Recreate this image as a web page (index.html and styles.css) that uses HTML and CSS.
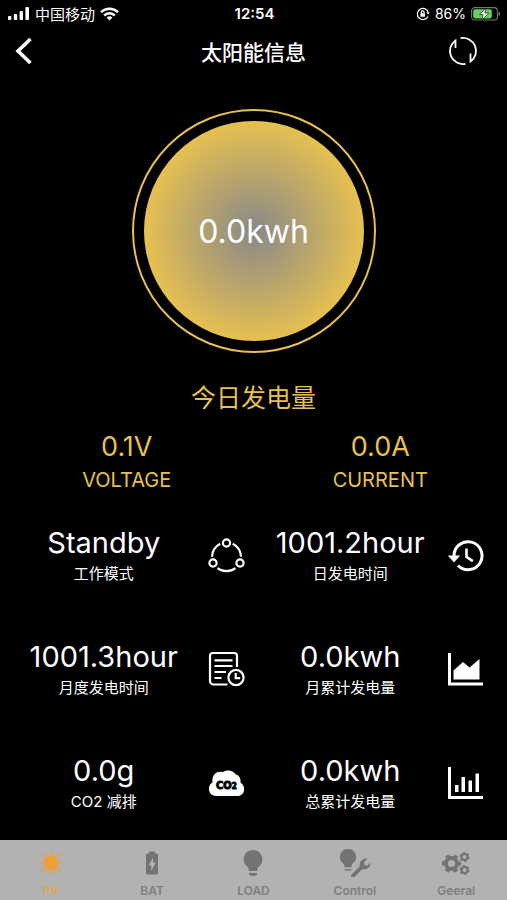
FILE: index.html
```html
<!DOCTYPE html>
<html lang="zh-CN">
<head>
  <meta charset="UTF-8" />
  <meta name="viewport" content="width=device-width, initial-scale=1" />
  <title>太阳能信息</title>
  <link rel="stylesheet" href="styles.css">
</head>
<body>
  <div class="status-bar">
    <div class="status-left">
      <svg width="22" height="14" viewBox="0 0 22 14" fill="#fff">
        <rect x="0" y="9" width="3.4" height="4" rx="1" />
        <rect x="5.8" y="7" width="3.4" height="6" rx="1" />
        <rect x="11.6" y="4" width="3.4" height="9" rx="1" />
        <rect x="17.4" y="0" width="3.6" height="13" rx="1" />
      </svg>
      <span>中国移动</span>
      <svg width="19" height="14" viewBox="0 0 19 14" fill="none" stroke="#fff" stroke-width="2.5">
        <path d="M1 5.2a12.2 12.2 0 0 1 17 0" />
        <path d="M4.2 8.5a7.6 7.6 0 0 1 10.6 0" />
        <path d="M6.6 10.6a4.2 4.2 0 0 1 5.8 0L9.5 13.6z" fill="#fff" stroke="none" />
      </svg>
    </div>
    <span class="clock">12:54</span>
    <div class="status-right">
      <svg width="14" height="14" viewBox="0 0 14 14" fill="none" stroke="#fff" stroke-width="1.2">
        <path d="M12.2 5A5.6 5.6 0 1 0 12 9.4" />
        <path d="M10.3 5.2h3.4L12.2 7.8z" fill="#fff" stroke="none" />
        <rect x="4.4" y="6.2" width="4.6" height="3.6" rx=".5" fill="#fff" stroke="none" />
        <path d="M5.3 6.5V5.3a1.4 1.4 0 0 1 2.8 0v1.2" />
      </svg>
      <span class="battery-level">86%</span>
      <svg width="30" height="14" viewBox="0 0 30 14">
        <rect x=".6" y=".6" width="25.8" height="12.4" rx="3.2" fill="none" stroke="#777" stroke-width="1.1" />
        <rect x="2.2" y="2.2" width="18.6" height="9.2" rx="1.8" fill="#65cf63" />
        <path d="M27.6 4.6c2.2.8 2.2 3.8 0 4.6z" fill="#777" />
        <path d="M15 1L8.4 7.6h3.8L10.8 13l7-7h-4z" fill="#fff" stroke="#000" stroke-width=".6" />
      </svg>
    </div>
  </div>

  <header class="header">
    <button type="button" class="icon-btn" aria-label="返回">
      <svg width="18" height="28" viewBox="0 0 18 28" fill="none" stroke="#fff" stroke-width="3.6">
        <path d="M15.5 2L3 14l12.5 12" />
      </svg>
    </button>
    <h1>太阳能信息</h1>
    <button type="button" class="icon-btn" aria-label="刷新">
      <svg width="30" height="30" viewBox="0 0 30 30" fill="none" stroke="#fff" stroke-width="1.8">
        <path d="M12.5 2.2A13 13 0 0 1 22.5 25.6V17.5" />
        <path d="M17.5 27.8A13 13 0 0 1 7.5 4.4V12" />
      </svg>
    </button>
  </header>

  <main>
    <div class="gauge">
      <div class="gauge-disc">0.0kwh</div>
    </div>
    <h2>今日发电量</h2>

    <div class="readings">
      <div class="reading">
        <span class="reading-value">0.1V</span>
        <span class="reading-name">VOLTAGE</span>
      </div>
      <div class="reading">
        <span class="reading-value">0.0A</span>
        <span class="reading-name">CURRENT</span>
      </div>
    </div>

    <div class="stats">
      <div class="stat">
        <div class="stat-text">
          <span class="stat-value">Standby</span>
          <span class="stat-label">工作模式</span>
        </div>
        <svg class="stat-icon" viewBox="0 0 37 37" fill="none" stroke="#fff" stroke-width="2.2">
          <circle cx="18.5" cy="6" r="3.6" />
          <circle cx="5" cy="26" r="3.6" />
          <circle cx="32" cy="26" r="3.6" />
          <path d="M12.3 6.8A15.3 15.3 0 0 0 4 19.8" />
          <path d="M24.7 6.8A15.3 15.3 0 0 1 33 19.8" />
          <path d="M9.5 31.2a15 15 0 0 0 18 0" />
        </svg>
      </div>
      <div class="stat">
        <div class="stat-text">
          <span class="stat-value">1001.2hour</span>
          <span class="stat-label">日发电时间</span>
        </div>
        <svg class="stat-icon" viewBox="0 0 37 37" fill="none" stroke="#fff" stroke-width="3">
          <path d="M7 19A14 14 0 1 1 11 28.5" />
          <path d="M.8 18.5h12.4L7 25.5z" fill="#fff" stroke="none" />
          <path d="M19.5 11.5v8.2l6.3 4.4" stroke-width="2.6" />
        </svg>
      </div>
      <div class="stat">
        <div class="stat-text">
          <span class="stat-value">1001.3hour</span>
          <span class="stat-label">月度发电时间</span>
        </div>
        <svg class="stat-icon" viewBox="0 0 37 37" fill="none" stroke="#fff" stroke-width="2.2">
          <path d="M19.5 33.5h-14A3.5 3.5 0 0 1 2 30V5a3 3 0 0 1 3-3h21a3 3 0 0 1 3 3v11" />
          <path d="M6.5 9.3h18M6.5 15h18M6.5 21H18M6.5 27h7" />
          <circle cx="28" cy="26.5" r="7.6" />
          <path d="M27.7 22v5.2h4.5" />
        </svg>
      </div>
      <div class="stat">
        <div class="stat-text">
          <span class="stat-value">0.0kwh</span>
          <span class="stat-label">月累计发电量</span>
        </div>
        <svg class="stat-icon" viewBox="0 0 37 37" fill="#fff">
          <path d="M1 2h3v29.5h32v3H1z" />
          <path d="M6.5 28.5v-9L16 11l6.5 5.5L32.5 8v20.5z" />
        </svg>
      </div>
      <div class="stat">
        <div class="stat-text">
          <span class="stat-value">0.0g</span>
          <span class="stat-label">CO2 减排</span>
        </div>
        <svg class="stat-icon" viewBox="0 0 37 37">
          <path d="M8 31C-.5 31-1 20 4.5 17.5 3.5 9.5 9.5 5.5 14.5 7.2c5-3.2 11-1.4 13 2 4 1 5.500 4.800 5 8.300C38.500 21.500 37 31 29 31z" fill="#fff" />
          <text class="co2" x="8" y="24">CO<tspan class="co2-sub">2</tspan></text>
        </svg>
      </div>
      <div class="stat">
        <div class="stat-text">
          <span class="stat-value">0.0kwh</span>
          <span class="stat-label">总累计发电量</span>
        </div>
        <svg class="stat-icon" viewBox="0 0 37 37" fill="#fff">
          <path d="M1 2h3v29h32v3H1z" />
          <path d="M8 20h3.5v7H8zM14.5 12H18v15h-3.5zM21.5 15.5H25V27h-3.5zM28.5 8.5H32V27h-3.5z" />
        </svg>
      </div>
    </div>
  </main>

  <nav class="tab-bar">
    <a href="#" class="tab active">
      <svg width="26" height="28" viewBox="0 0 26 28" fill="currentColor">
        <circle cx="13" cy="14" r="7.6" />
        <path d="M11.500 5L13 1.500 14.500 5zM11.500 23l1.500 3.500 1.500-3.500zM4 12.500L.5 14 4 15.500zM22 12.500l3.500 1.500-3.500 1.500z" />
        <path d="M5.500 8.500L4 5l3.500 1.500zM18.500 6.500L22 5l-1.500 3.500zM5.500 19.500L4 23l3.500-1.500zM18.500 21.500L22 23l-1.500-3.500z" stroke="currentColor" stroke-width=".6" />
      </svg>
      <span>PV</span>
    </a>
    <a href="#" class="tab">
      <svg width="26" height="28" viewBox="0 0 26 28" fill="currentColor">
        <path fill-rule="evenodd" d="M10 2.500h6v2h1.500q1.500 0 1.500 1.500v18q0 1.500-1.500 1.500h-9Q7 25.500 7 24V6q0-1.500 1.500-1.500H10zM14 8.500L9.500 16.500h2.800V22L16.800 13.500H14z" />
      </svg>
      <span>BAT</span>
    </a>
    <a href="#" class="tab">
      <svg width="26" height="28" viewBox="0 0 26 28" fill="currentColor">
        <path d="M13 1a9.300 9.300 0 0 1 5.600 16.700c-1 .9-1.300 1.800-1.300 4.300H8.700c0-2.500-.3-3.400-1.300-4.300A9.300 9.300 0 0 1 13 1zM9 24h8v1.500l-2.500 1.500h-3L9 25.500z" />
      </svg>
      <span>LOAD</span>
    </a>
    <a href="#" class="tab">
      <svg width="32" height="28" viewBox="0 0 32 28" fill="currentColor">
        <path d="M9 0a8 8 0 0 1 4.700 14.500c-.9.800-1.200 2-1.200 3.700h-7c0-1.700-.3-2.900-1.200-3.700A8 8 0 0 1 9 0zM5.800 20h6.400v1.500H5.800z" />
        <path d="M12.500 25.500l8.300-8.200a6.300 6.300 0 0 1 7.700-7.500l-3.600 3.500.8 2.800 2.800.7 2.800-3.300a6 6 0 0 1-7.800 6.500l-8.200 8a1.800 1.800 0 0 1-2.800-2.500z" />
      </svg>
      <span>Control</span>
    </a>
    <a href="#" class="tab">
      <svg width="28" height="28" viewBox="0 0 28 28" fill="none" stroke="currentColor">
        <circle cx="9.500" cy="14.500" r="5.600" stroke-width="4" />
        <circle cx="9.500" cy="14.500" r="8.300" stroke-width="2.400" stroke-dasharray="4.400 4.290" stroke-dashoffset="2.200" />
        <circle cx="22.500" cy="8" r="3" stroke-width="2" />
        <circle cx="22.500" cy="8" r="4.400" stroke-width="1.400" stroke-dasharray="2.300" />
        <circle cx="22.500" cy="21" r="3" stroke-width="2" />
        <circle cx="22.500" cy="21" r="4.400" stroke-width="1.400" stroke-dasharray="2.300" />
      </svg>
      <span>Geeral</span>
    </a>
  </nav>
</body>
</html>
```
FILE: styles.css
```css
* {
  box-sizing: border-box;
}
body {
  font-family: Inter, "Noto Sans CJK SC", sans-serif;
  background: #000;
  color: #fff;
  margin: 0;
  min-height: 100vh;
  display: flex;
  flex-direction: column;
}
svg {
  display: block;
  flex: none;
}

/* status bar */
.status-bar {
  display: grid;
  grid-template-columns: 1fr auto 1fr;
  align-items: center;
  height: 27px;
  padding: 0 6px 0 8px;
  font-size: 15px;
}
.status-left, .status-right {
  display: flex;
  align-items: center;
  gap: 5px;
}
.status-right {
  justify-content: flex-end;
}
.clock {
  font-weight: 600;
}
.battery-level {
  font-size: 14px;
}

/* title row */
.header {
  display: grid;
  grid-template-columns: 1fr auto 1fr;
  align-items: center;
  height: 48px;
  padding: 0 15px;
}
.header h1 {
  margin: 0;
  font-size: 21px;
  font-weight: 500;
}
.icon-btn {
  width: 32px;
  padding: 0;
  border: none;
  background: none;
  cursor: pointer;
}
.icon-btn:last-child {
  justify-self: end;
  margin-right: 12px;
}

/* today's output */
.gauge {
  width: 244px;
  height: 244px;
  margin: 34px auto 0;
  padding: 10px;
  border: 2px solid #e6c050;
  border-radius: 50%;
}
.gauge-disc {
  display: flex;
  align-items: center;
  justify-content: center;
  height: 100%;
  border-radius: 50%;
  background: radial-gradient(circle closest-side, #88888a, #e6c050);
  font-size: 32px;
}
h2 {
  margin: 27px 0 0;
  font-size: 25px;
  line-height: 36px;
  font-weight: 400;
  text-align: center;
  color: #e6c050;
}

.readings {
  display: grid;
  grid-template-columns: 1fr 1fr;
  margin-top: 14px;
  color: #e6c050;
}
.reading {
  display: flex;
  flex-direction: column;
  align-items: center;
}
.reading-value {
  font-size: 27px;
  line-height: 34px;
}
.reading-name {
  font-size: 20px;
  line-height: 32px;
}

/* stats grid */
.stats {
  display: grid;
  grid-template-columns: 1fr 1fr;
  row-gap: 52px;
  margin: 29px 0 24px;
}
.stat {
  display: flex;
  align-items: flex-start;
  padding-right: 9px;
}
.stat:nth-child(even) {
  padding-right: 23px;
}
.stat-text {
  flex: 1;
  display: flex;
  flex-direction: column;
  align-items: center;
}
.stat-value {
  font-size: 29px;
  line-height: 36px;
}
.stat-label {
  font-size: 15px;
  line-height: 26px;
}
.stat-icon {
  width: 37px;
  height: 37px;
  margin-top: 12px;
}
.co2 {
  font-family: "DejaVu Sans Condensed", "Liberation Sans", sans-serif;
  font-size: 11px;
  font-weight: 700;
  stroke: #000;
  stroke-width: 1px;
}
.co2-sub {
  font-size: 8px;
}

/* bottom tabs */
.tab-bar {
  display: grid;
  grid-template-columns: repeat(5, 1fr);
  height: 60px;
  margin-top: auto;
  background: #b2b2b2;
}
.tab {
  display: flex;
  flex-direction: column;
  align-items: center;
  justify-content: space-between;
  padding: 9px 0 2px;
  color: #737373;
  font-size: 12px;
  line-height: 14px;
  font-weight: 600;
  text-decoration: none;
}
.tab span {
  opacity: .8;
}
.tab.active {
  color: #ee9f35;
}
```
